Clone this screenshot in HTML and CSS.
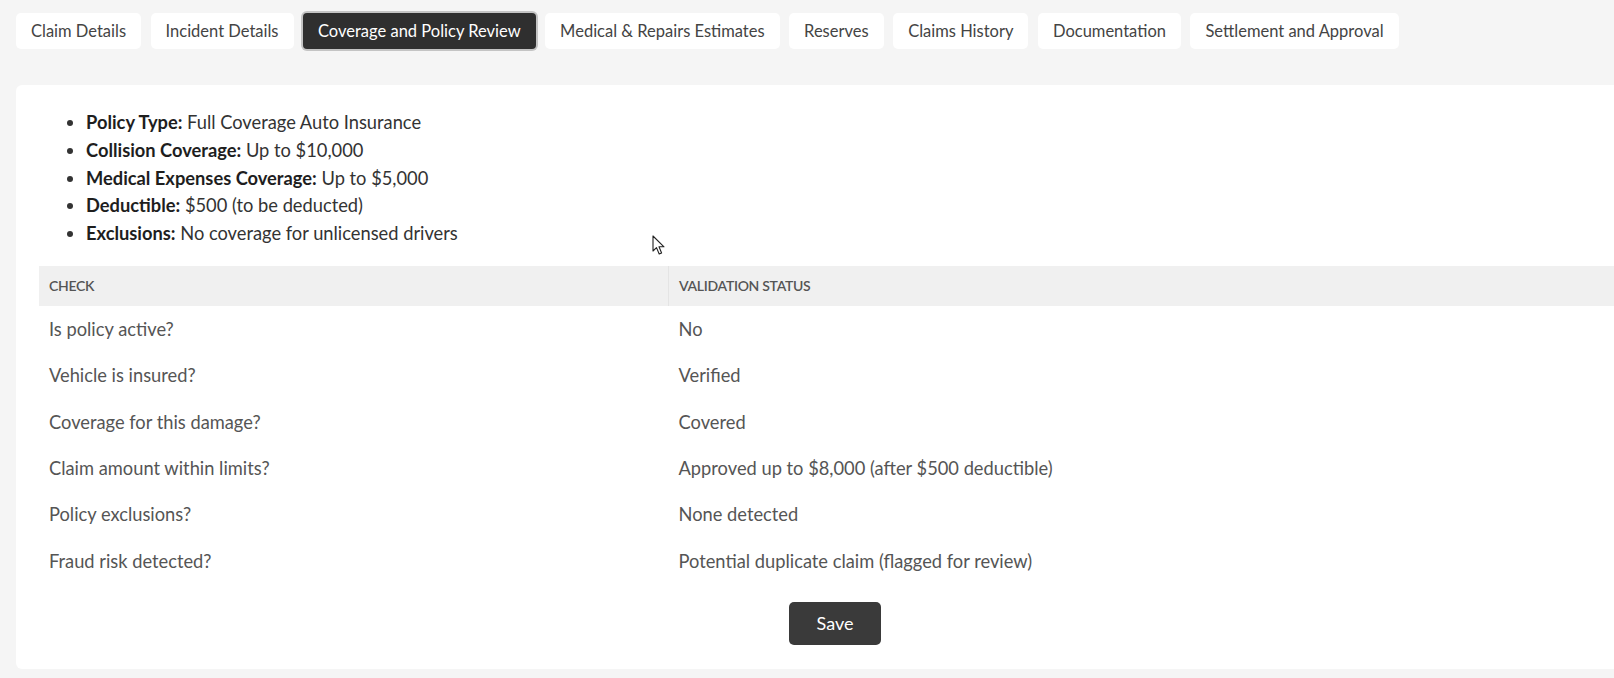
FILE: index.html
```html
<!doctype html>
<html>
  <head>
    <meta charset="utf-8">
    <title>Coverage and Policy Review</title>
    <link rel="stylesheet" href="styles.css">
  </head>
  <body>
    <div class="tabs">
      <button class="tab">Claim Details</button>
      <button class="tab">Incident Details</button>
      <button class="tab active">Coverage and Policy Review</button>
      <button class="tab">Medical &amp; Repairs Estimates</button>
      <button class="tab">Reserves</button>
      <button class="tab">Claims History</button>
      <button class="tab">Documentation</button>
      <button class="tab">Settlement and Approval</button>
    </div>

    <div class="card">
      <ul class="policy">
        <li><b>Policy Type:</b> Full Coverage Auto Insurance</li>
        <li><b>Collision Coverage:</b> Up to $10,000</li>
        <li><b>Medical Expenses Coverage:</b> Up to $5,000</li>
        <li><b>Deductible:</b> $500 (to be deducted)</li>
        <li><b>Exclusions:</b> No coverage for unlicensed drivers</li>
      </ul>

      <table class="checks">
        <thead>
          <tr><th class="col-check">Check</th><th>Validation Status</th></tr>
        </thead>
        <tbody>
          <tr><td>Is policy active?</td><td>No</td></tr>
          <tr><td>Vehicle is insured?</td><td>Verified</td></tr>
          <tr><td>Coverage for this damage?</td><td>Covered</td></tr>
          <tr><td>Claim amount within limits?</td><td>Approved up to $8,000 (after $500 deductible)</td></tr>
          <tr><td>Policy exclusions?</td><td>None detected</td></tr>
          <tr><td>Fraud risk detected?</td><td>Potential duplicate claim (flagged for review)</td></tr>
        </tbody>
      </table>

      <div class="actions">
        <button class="save">Save</button>
      </div>
    </div>

    <svg class="cursor" width="14" height="21" viewBox="0 0 14 21">
      <path d="M1 1 L1 16 L4.5 12.6 L7.2 19 L9.6 18 L7 11.8 L12 11.8 Z" fill="#fff" stroke="#222" stroke-width="1.1" stroke-linejoin="round"/>
    </svg>
  </body>
</html>
```

FILE: styles.css
```css
html {
  overflow: hidden;
}
body {
  margin: 0;
  padding: 13px 16px;
  background: #f5f5f5;
  font-family: Lato, "Open Sans", sans-serif;
  color: #333;
}
.tabs {
  display: flex;
  gap: 9.5px;
}
.tab {
  font-family: inherit;
  font-size: 16.5px;
  color: #444;
  background: #fff;
  border: none;
  border-radius: 5px;
  height: 36px;
  padding: 0 15px;
}
.tab.active {
  background: #2f2f2f;
  color: #fff;
  box-shadow: 0 0 0 2px #c4c4c4;
  border-radius: 4px;
}
.card {
  margin-top: 36px;
  width: 1620px;
  background: #fff;
  border-radius: 6px;
  padding: 24px 23px 24px;
}
.policy {
  margin: 0 0 18px;
  padding-left: 47px;
  font-size: 18.3px;
  line-height: 27.8px;
  color: #333;
}
.policy b {
  color: #1e1e1e;
}
.checks {
  width: 100%;
  border-collapse: collapse;
  font-size: 18.3px;
  color: #555;
}
.checks th {
  background: #f0f0f0;
  height: 40px;
  padding: 0 10px;
  text-align: left;
  font-size: 14px;
  font-weight: 600;
  text-transform: uppercase;
  letter-spacing: -0.3px;
  color: #555;
  border-left: 1px solid #e4e4e4;
}
.checks th.col-check {
  width: 609px;
  border-left: none;
}
.checks td {
  height: 46.3px;
  padding: 0 10px;
}
.actions {
  display: flex;
  justify-content: center;
  margin-top: 18px;
  width: 1592px;
}
.save {
  font-family: inherit;
  font-size: 18px;
  color: #fff;
  background: #3a3a3a;
  border: none;
  border-radius: 5px;
  width: 92px;
  height: 43px;
}
.cursor {
  position: absolute;
  left: 652px;
  top: 235px;
}
```
